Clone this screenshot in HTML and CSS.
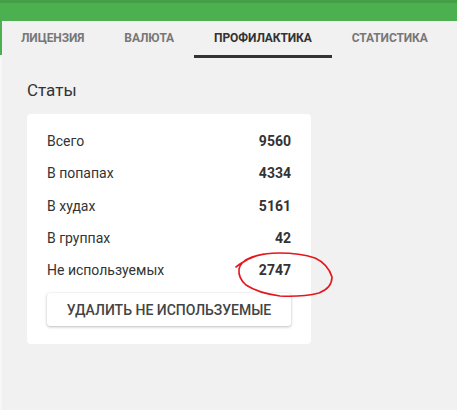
FILE: index.html
```html
<!DOCTYPE html>
<html>
<head>
<meta charset="utf-8">
<link rel="stylesheet" href="styles.css">
</head>
<body>
<div class="topbar"></div>
<div class="main">
  <div class="gutter"></div>
  <div class="panel">
    <nav class="tabs">
      <div class="tab">Лицензия</div>
      <div class="tab">Валюта</div>
      <div class="tab active">Профилактика</div>
      <div class="tab">Статистика</div>
    </nav>
    <section class="content">
      <h2 class="title">Статы</h2>
      <div class="card">
        <div class="row"><span>Всего</span><b>9560</b></div>
        <div class="row"><span>В попапах</span><b>4334</b></div>
        <div class="row"><span>В худах</span><b>5161</b></div>
        <div class="row"><span>В группах</span><b>42</b></div>
        <div class="row"><span>Не используемых</span><b>2747</b></div>
        <button class="btn">Удалить не используемые</button>
      </div>
    </section>
  </div>
</div>
<svg class="scribble" width="457" height="410" viewBox="0 0 457 410">
  <path d="M236 267 L240 264 Q247 259 256 256 Q266 253 279 253 Q300 253 315 258 Q328 264 332 277 Q332 288 319 293 Q303 297 280 296 Q258 293 246 285 Q238 278 239 269 Q241 261 252 257 Q258 255 264 254" fill="none" stroke="#e5161b" stroke-width="1.6" stroke-linecap="round" stroke-linejoin="round"/>
</svg>
</body>
</html>
```
FILE: styles.css
```css
html, body {
  margin: 0;
  padding: 0;
}
body {
  width: 457px;
  height: 410px;
  overflow: hidden;
  background: #f7f7f7;
  font-family: Roboto, "Noto Sans", sans-serif;
  color: #333;
  position: relative;
}
.topbar {
  height: 18px;
  background: #4caf50;
  border-top: 3px solid #43a047;
}
.main {
  display: flex;
  height: 389px;
}
.gutter {
  width: 2px;
  flex: none;
  background: linear-gradient(#4caf50 0, #4caf50 34px, #f7f7f7 34px);
}
.panel {
  flex: 1;
  background: #f1f1f1;
  border-top-left-radius: 4px;
}
.tabs {
  display: flex;
  height: 37px;
  margin-left: -1px;
}
.tab {
  padding: 0 20px;
  height: 34px;
  line-height: 34px;
  border-bottom: 3px solid transparent;
  font-size: 12px;
  font-weight: 700;
  text-transform: uppercase;
  letter-spacing: -0.1px;
  color: #777;
}
.tab.active {
  color: #333;
  border-bottom-color: #333;
}
.content {
  padding: 21px 0 0 25px;
}
.title {
  margin: 0;
  font-size: 17px;
  font-weight: 400;
  line-height: 22px;
  color: #333;
}
.card {
  margin-top: 13px;
  width: 244px;
  background: #fff;
  border-radius: 4px;
  padding: 11px 20px 18px 20px;
  display: flex;
  flex-direction: column;
}
.row {
  display: flex;
  justify-content: space-between;
  align-items: center;
  height: 32.3px;
  font-size: 14px;
}
.row b {
  font-weight: 700;
}
.btn {
  margin-top: 7px;
  height: 33px;
  border: none;
  border-radius: 3px;
  background: #fff;
  box-shadow: 0 1px 3px rgba(0,0,0,0.25), 0 0 1px rgba(0,0,0,0.12);
  font-family: Roboto, "Noto Sans", sans-serif;
  font-size: 14px;
  font-weight: 500;
  text-transform: uppercase;
  color: #444;
  padding: 0;
}
.scribble {
  position: absolute;
  left: 0;
  top: 0;
  pointer-events: none;
}
```
